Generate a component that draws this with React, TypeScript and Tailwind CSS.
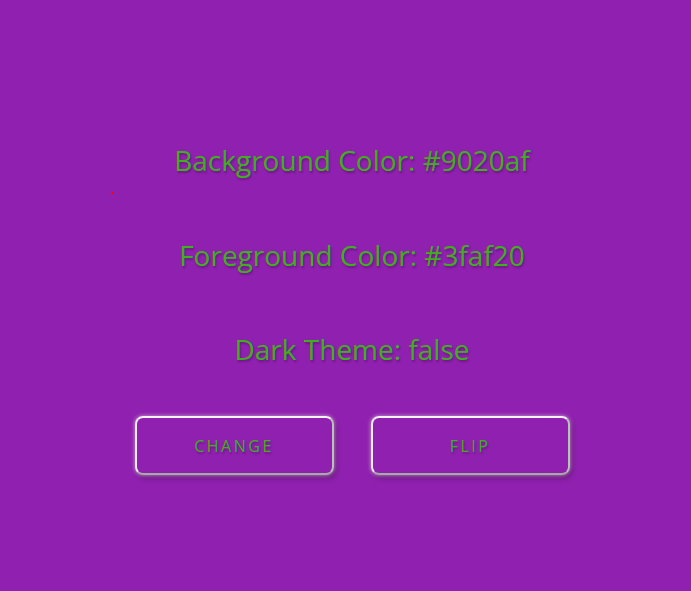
export default function App() {
  return (
    <div className="relative min-h-[591px] w-full bg-[#9020af] font-['Open_Sans',sans-serif] text-[#3faf20]">
      <span className="absolute left-[112px] top-[192px] h-[2px] w-[2px] bg-[#ff0000]" />
      <div className="flex flex-col items-center pl-[13px] pt-[140px]">
        <p className="h-[40px] text-[28px] font-medium leading-[40px] [text-shadow:1px_2px_2px_rgba(0,0,0,0.25)]">Background Color: #9020af</p>
        <p className="mt-[55px] h-[40px] text-[28px] font-medium leading-[40px] [text-shadow:1px_2px_2px_rgba(0,0,0,0.25)]">Foreground Color: #3faf20</p>
        <p className="mt-[54px] h-[40px] text-[28px] font-medium leading-[40px] [text-shadow:1px_2px_2px_rgba(0,0,0,0.25)]">Dark Theme: false</p>
        <div className="mt-[47px] flex gap-[37px]">
          <button className="h-[59px] w-[199px] rounded-[8px] border-2 border-t-[#f4f4f4] border-l-[#ececec] border-r-[#bdbdbd] border-b-[#a8a8a8] text-[16px] font-medium tracking-[2.5px] shadow-[0_0_4px_rgba(255,255,255,0.6),2px_3px_5px_rgba(0,0,0,0.35)] [text-shadow:1px_2px_2px_rgba(0,0,0,0.25)]">
            CHANGE
          </button>
          <button className="h-[59px] w-[199px] rounded-[8px] border-2 border-t-[#f4f4f4] border-l-[#ececec] border-r-[#bdbdbd] border-b-[#a8a8a8] text-[16px] font-medium tracking-[2.5px] shadow-[0_0_4px_rgba(255,255,255,0.6),2px_3px_5px_rgba(0,0,0,0.35)] [text-shadow:1px_2px_2px_rgba(0,0,0,0.25)]">
            FLIP
          </button>
        </div>
      </div>
    </div>
  );
}
